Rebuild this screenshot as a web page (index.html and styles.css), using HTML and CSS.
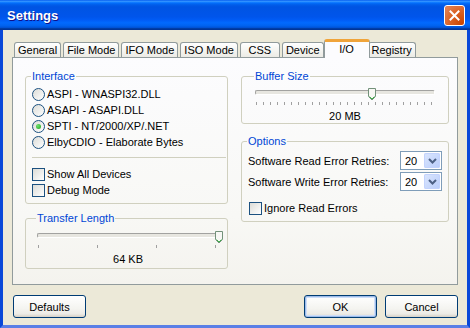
FILE: index.html
```html
<!DOCTYPE html>
<html lang="en">
<head>
    <meta charset="UTF-8">
    <title>Settings</title>
    <link rel="stylesheet" href="styles.css">
</head>
<body>

<div class="window">

    <!-- Title bar -->
    <div class="titlebar">
        <span class="title">Settings</span>
        <button class="close-btn" type="button" aria-label="Close">
            <svg width="11" height="11" viewBox="0 0 11 11">
                <path d="M1.5 1.5 L9.5 9.5 M9.5 1.5 L1.5 9.5" stroke="#fff" stroke-width="2" stroke-linecap="square"/>
            </svg>
        </button>
    </div>

    <div class="frame">

        <!-- Tabs -->
        <ul class="tabs">
            <li>General</li>
            <li>File Mode</li>
            <li>IFO Mode</li>
            <li>ISO Mode</li>
            <li>CSS</li>
            <li>Device</li>
            <li class="active">I/O</li>
            <li>Registry</li>
        </ul>

        <div class="tab-panel">
            <div class="column">
                <fieldset class="group group-interface">
                    <legend>Interface</legend>
                    <label class="option"><span class="radio"></span>ASPI - WNASPI32.DLL</label>
                    <label class="option"><span class="radio"></span>ASAPI - ASAPI.DLL</label>
                    <label class="option"><span class="radio checked"></span>SPTI - NT/2000/XP/.NET</label>
                    <label class="option"><span class="radio"></span>ElbyCDIO - Elaborate Bytes</label>
                    <hr class="separator">
                    <label class="option"><span class="checkbox"></span>Show All Devices</label>
                    <label class="option"><span class="checkbox"></span>Debug Mode</label>
                </fieldset>

                <fieldset class="group group-transfer">
                    <legend>Transfer Length</legend>
                    <div class="trackbar trackbar-transfer">
                        <div class="track"></div>
                        <svg class="thumb" style="left: 100%" width="8" height="13" viewBox="0 0 8 13">
                            <path d="M0.5 0.5 H7.5 V8.5 L4 12 L0.5 8.5 Z" fill="#f7f7f4" stroke="#73917a"/>
                            <path d="M1.5 8.5 L4 11 L6.5 8.5" fill="none" stroke="#3fb04a"/>
                        </svg>
                    </div>
                    <div class="ticks" id="transferTicks"></div>
                    <div class="track-value">64 KB</div>
                </fieldset>
            </div>

            <div class="column">
                <fieldset class="group group-buffer">
                    <legend>Buffer Size</legend>
                    <div class="trackbar trackbar-buffer">
                        <div class="track"></div>
                        <svg class="thumb" style="left: 65%" width="8" height="13" viewBox="0 0 8 13">
                            <path d="M0.5 0.5 H7.5 V8.5 L4 12 L0.5 8.5 Z" fill="#f7f7f4" stroke="#73917a"/>
                            <path d="M1.5 8.5 L4 11 L6.5 8.5" fill="none" stroke="#3fb04a"/>
                        </svg>
                    </div>
                    <div class="ticks" id="bufferTicks"></div>
                    <div class="track-value">20 MB</div>
                </fieldset>

                <fieldset class="group group-options">
                    <legend>Options</legend>
                    <div class="field-row">
                        <span>Software Read Error Retries:</span>
                        <div class="combo">
                            <span class="combo-text">20</span>
                            <span class="combo-btn">
                                <svg width="9" height="6" viewBox="0 0 9 6"><path d="M1 1 L4.5 4.5 L8 1" fill="none" stroke="#4d6185" stroke-width="2"/></svg>
                            </span>
                        </div>
                    </div>
                    <div class="field-row">
                        <span>Software Write Error Retries:</span>
                        <div class="combo">
                            <span class="combo-text">20</span>
                            <span class="combo-btn">
                                <svg width="9" height="6" viewBox="0 0 9 6"><path d="M1 1 L4.5 4.5 L8 1" fill="none" stroke="#4d6185" stroke-width="2"/></svg>
                            </span>
                        </div>
                    </div>
                    <label class="option option-ignore"><span class="checkbox"></span>Ignore Read Errors</label>
                </fieldset>
            </div>
        </div>

        <!-- Dialog buttons -->
        <div class="dialog-buttons">
            <button type="button" class="btn">Defaults</button>
            <span class="spacer"></span>
            <button type="button" class="btn btn-default">OK</button>
            <button type="button" class="btn">Cancel</button>
        </div>
    </div>
</div>

<script>
    function drawTicks(id, count) {
        const box = document.getElementById(id);
        box.innerHTML = Array.from({ length: count }, () => '<span></span>').join('');
    }

    drawTicks("transferTicks", 4);
    drawTicks("bufferTicks", 26);
</script>

</body>
</html>
```

FILE: styles.css
```css
body {
    margin: 0;
    font-family: 'Liberation Sans', Arial, sans-serif;
    font-size: 11px;
    color: #000;
    background: #fff;
}

.window {
    width: 470px;
    height: 328px;
    display: flex;
    flex-direction: column;
}

/* Title bar */
.titlebar {
    flex: none;
    height: 30px;
    display: flex;
    align-items: center;
    justify-content: space-between;
    padding: 0 5px 0 7px;
    background: linear-gradient(to bottom, #0058ee 0%, #3593ff 4%, #288eff 6%, #127dff 8%, #036ffc 10%, #0262ee 14%, #0057e5 20%, #0054e3 24%, #0055eb 56%, #005bf5 66%, #026afe 76%, #0062ef 86%, #0052d6 92%, #0040ab 94%, #003092 100%);
}

.titlebar .title {
    color: #fff;
    font-family: 'Liberation Sans', Arial, sans-serif;
    font-weight: bold;
    font-size: 13px;
    text-shadow: 1px 1px #0f1089;
}

.close-btn {
    width: 21px;
    height: 21px;
    padding: 0;
    display: flex;
    align-items: center;
    justify-content: center;
    border: 1px solid #fff;
    border-radius: 3px;
    background: radial-gradient(circle at 90% 90%, #cc4600 0%, #dc6527 55%, #e38a62 100%);
    box-shadow: inset 0 0 1px #bf4a20;
}

/* Frame */
.frame {
    flex: 1;
    display: flex;
    flex-direction: column;
    padding: 9px 9px 0;
    background: #ece9d8;
    border-left: 3px solid #0a48d8;
    border-right: 3px solid #0a48d8;
    border-bottom: 3px solid #5a7fe6;
}

/* Tabs */
.tabs {
    list-style: none;
    margin: 0;
    padding: 0 0 0 2px;
    height: 18px;
    display: flex;
    align-items: flex-end;
}

.tabs li {
    height: 15px;
    min-width: 40px;
    box-sizing: border-box;
    margin-right: 2px;
    padding: 0 3px;
    text-align: center;
    line-height: 14px;
    border: 1px solid #919b9c;
    border-bottom: none;
    border-radius: 3px 3px 0 0;
    background: linear-gradient(to bottom, #fff, #f3f3ef 60%, #ecebe5);
}

.tabs li.active {
    position: relative;
    z-index: 1;
    height: 19px;
    min-width: 46px;
    margin: 0 0 -1px -2px;
    padding: 0 4px;
    line-height: 14px;
    border-top: 3px solid #f0a43a;
    background: #fcfcfe;
}

.tabs li.active + li {
    margin-left: -2px;
}

.tab-panel {
    height: 228px;
    box-sizing: border-box;
    display: grid;
    grid-template-columns: 203px 208px;
    column-gap: 13px;
    align-items: start;
    padding: 12px 8px 0 12px;
    border: 1px solid #919b9c;
    background: linear-gradient(to bottom, #fcfcfe, #f8f8f5 70%, #f4f3ee);
}

/* Group boxes */
.group {
    margin: 0;
    min-width: 0;
    border: 1px solid #d0d0bf;
    border-radius: 3px;
}

.group legend {
    color: #0046d5;
    padding: 0 1px;
    margin-left: -1px;
    line-height: 13px;
}

.group-interface {
    padding: 3px 1px 5px 6px;
}

.group-transfer {
    margin-top: 8px;
    padding: 0 8px 2px 11px;
}

.group-buffer {
    padding: 0 13px 0 13px;
}

.group-options {
    margin-top: 11px;
    padding: 2px 6px 5px 6px;
}

.option {
    height: 16px;
    display: flex;
    align-items: center;
}

.radio {
    width: 13px;
    height: 13px;
    box-sizing: border-box;
    margin-right: 2px;
    border: 1px solid #1c5180;
    border-radius: 50%;
    background: linear-gradient(135deg, #dcdcd7, #fff);
    display: flex;
    align-items: center;
    justify-content: center;
}

.radio.checked::after {
    content: "";
    width: 5px;
    height: 5px;
    border-radius: 50%;
    background: radial-gradient(circle at 35% 35%, #6ee36e, #21a121);
}

.checkbox {
    width: 13px;
    height: 13px;
    box-sizing: border-box;
    margin-right: 2px;
    border: 1px solid #1c5180;
    background: linear-gradient(135deg, #dcdcd7, #fff);
}

.separator {
    margin: 7px 0 8px;
    border: none;
    border-top: 1px solid #d0d0bf;
    height: 0;
}

/* Trackbars */
.trackbar {
    position: relative;
    margin-top: 7px;
    height: 5px;
}

.track {
    height: 5px;
    box-sizing: border-box;
    border: 1px solid #a2a2a0;
    border-bottom-color: #fff;
    border-right-color: #fff;
    border-radius: 2px;
    background: #e7e6e0;
}

.thumb {
    position: absolute;
    top: -2px;
    margin-left: -4px;
}

.trackbar-transfer {
    margin-top: 8px;
}

.ticks {
    display: flex;
    justify-content: space-between;
    height: 3px;
    margin: 7px 3px 0 1px;
}

.ticks span {
    width: 1px;
    height: 3px;
    background: #a0a0a0;
}

.track-value {
    margin-top: 5px;
    line-height: 13px;
    text-align: center;
}

/* Options */
.field-row {
    height: 21px;
    display: flex;
    align-items: center;
    justify-content: space-between;
}

.combo {
    width: 42px;
    height: 19px;
    box-sizing: border-box;
    display: flex;
    align-items: center;
    justify-content: space-between;
    padding: 1px;
    border: 1px solid #7f9db9;
    background: #fff;
}

.combo-text {
    padding-left: 3px;
}

.combo-btn {
    width: 16px;
    height: 15px;
    display: flex;
    align-items: center;
    justify-content: center;
    border-radius: 2px;
    background: linear-gradient(135deg, #dbe6fd, #b9cdfb);
    box-shadow: inset 0 0 0 1px #c3d3fd;
}

.option-ignore {
    margin-top: 8px;
    padding-left: 1px;
}

/* Dialog buttons */
.dialog-buttons {
    display: flex;
    align-items: center;
    margin-top: 10px;
    padding-left: 1px;
}

.dialog-buttons .spacer {
    flex: 1;
}

.btn {
    width: 73px;
    height: 23px;
    margin-left: 8px;
    padding: 0;
    font-family: inherit;
    font-size: 11px;
    color: #000;
    border: 1px solid #003c74;
    border-radius: 3px;
    background: linear-gradient(to bottom, #fff, #f4f4f0 60%, #ecebe6 85%, #d6d0c5);
}

.btn:first-child {
    margin-left: 0;
}

.btn-default {
    box-shadow: inset 0 0 0 1px #9dbce9, inset 0 0 0 2px #cedef8;
}
```
